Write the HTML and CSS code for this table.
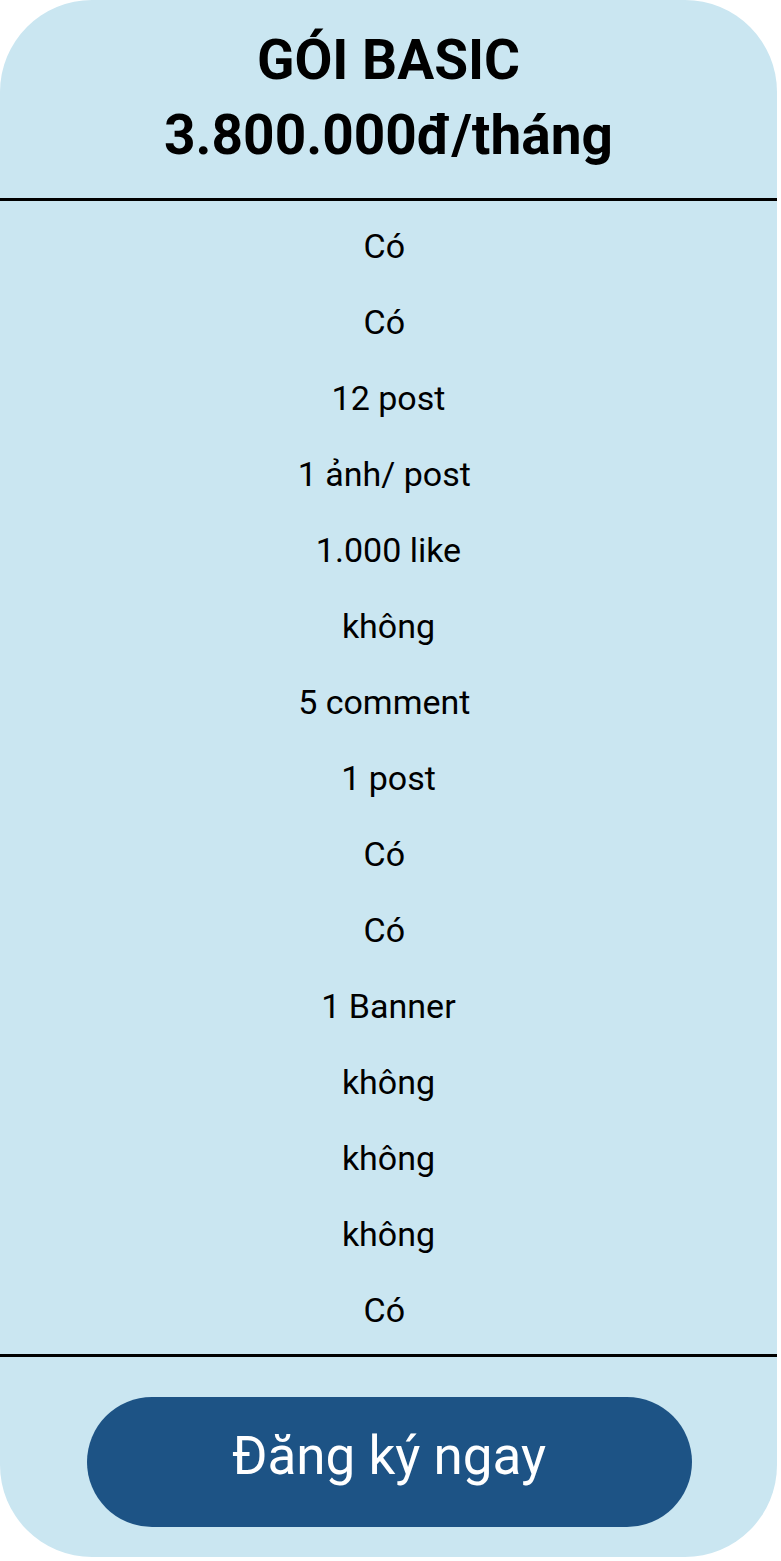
FILE: index.html
```html
<!DOCTYPE html>
<html lang="vi">
<head>
<meta charset="utf-8">
<title>Gói Basic</title>
<link rel="stylesheet" href="styles.css">
</head>
<body>
<div class="card">
  <div class="card-head">
    <h2 class="title">GÓI BASIC<br>3.800.000đ/tháng</h2>
  </div>
  <ul class="features">
    <li>Có&nbsp;</li>
    <li>Có&nbsp;</li>
    <li>12 post</li>
    <li>1 ảnh/ post&nbsp;</li>
    <li>1.000 like</li>
    <li>không</li>
    <li>5 comment&nbsp;</li>
    <li>1 post</li>
    <li>Có&nbsp;</li>
    <li>Có&nbsp;</li>
    <li>1 Banner</li>
    <li>không</li>
    <li>không</li>
    <li>không</li>
    <li>Có&nbsp;</li>
  </ul>
  <div class="card-foot">
    <a class="btn" href="#">Đăng ký ngay</a>
  </div>
</div>
</body>
</html>
```
FILE: styles.css
```css
html, body {
  margin: 0;
  padding: 0;
  background: #ffffff;
}
body {
  font-family: Roboto, "Liberation Sans", Arial, sans-serif;
  color: #000;
}
.card {
  width: 777px;
  height: 1557px;
  background: #cae6f1;
  border-radius: 92px;
  display: flex;
  flex-direction: column;
  box-sizing: border-box;
}
.card-head {
  height: 198px;
  border-bottom: 3px solid #000;
  display: flex;
  align-items: center;
  justify-content: center;
  box-sizing: content-box;
}
.title {
  margin: 0;
  font-size: 55px;
  font-weight: 700;
  line-height: 75px;
  text-align: center;
  padding-bottom: 2px;
}
.features {
  list-style: none;
  margin: 0;
  padding: 7px 0 6px;
  border-bottom: 3px solid #000;
}
.features li {
  height: 76px;
  display: flex;
  align-items: center;
  justify-content: center;
  font-size: 34px;
  white-space: pre;
}
.card-foot {
  flex: 1;
  display: flex;
  justify-content: center;
  padding-top: 40px;
}
.btn {
  width: 605px;
  height: 130px;
  box-sizing: border-box;
  padding-bottom: 12px;
  border-radius: 65px;
  background: #1d5385;
  color: #fff;
  text-decoration: none;
  display: flex;
  align-items: center;
  justify-content: center;
  font-size: 53px;
  margin-left: 1px;
}
```
